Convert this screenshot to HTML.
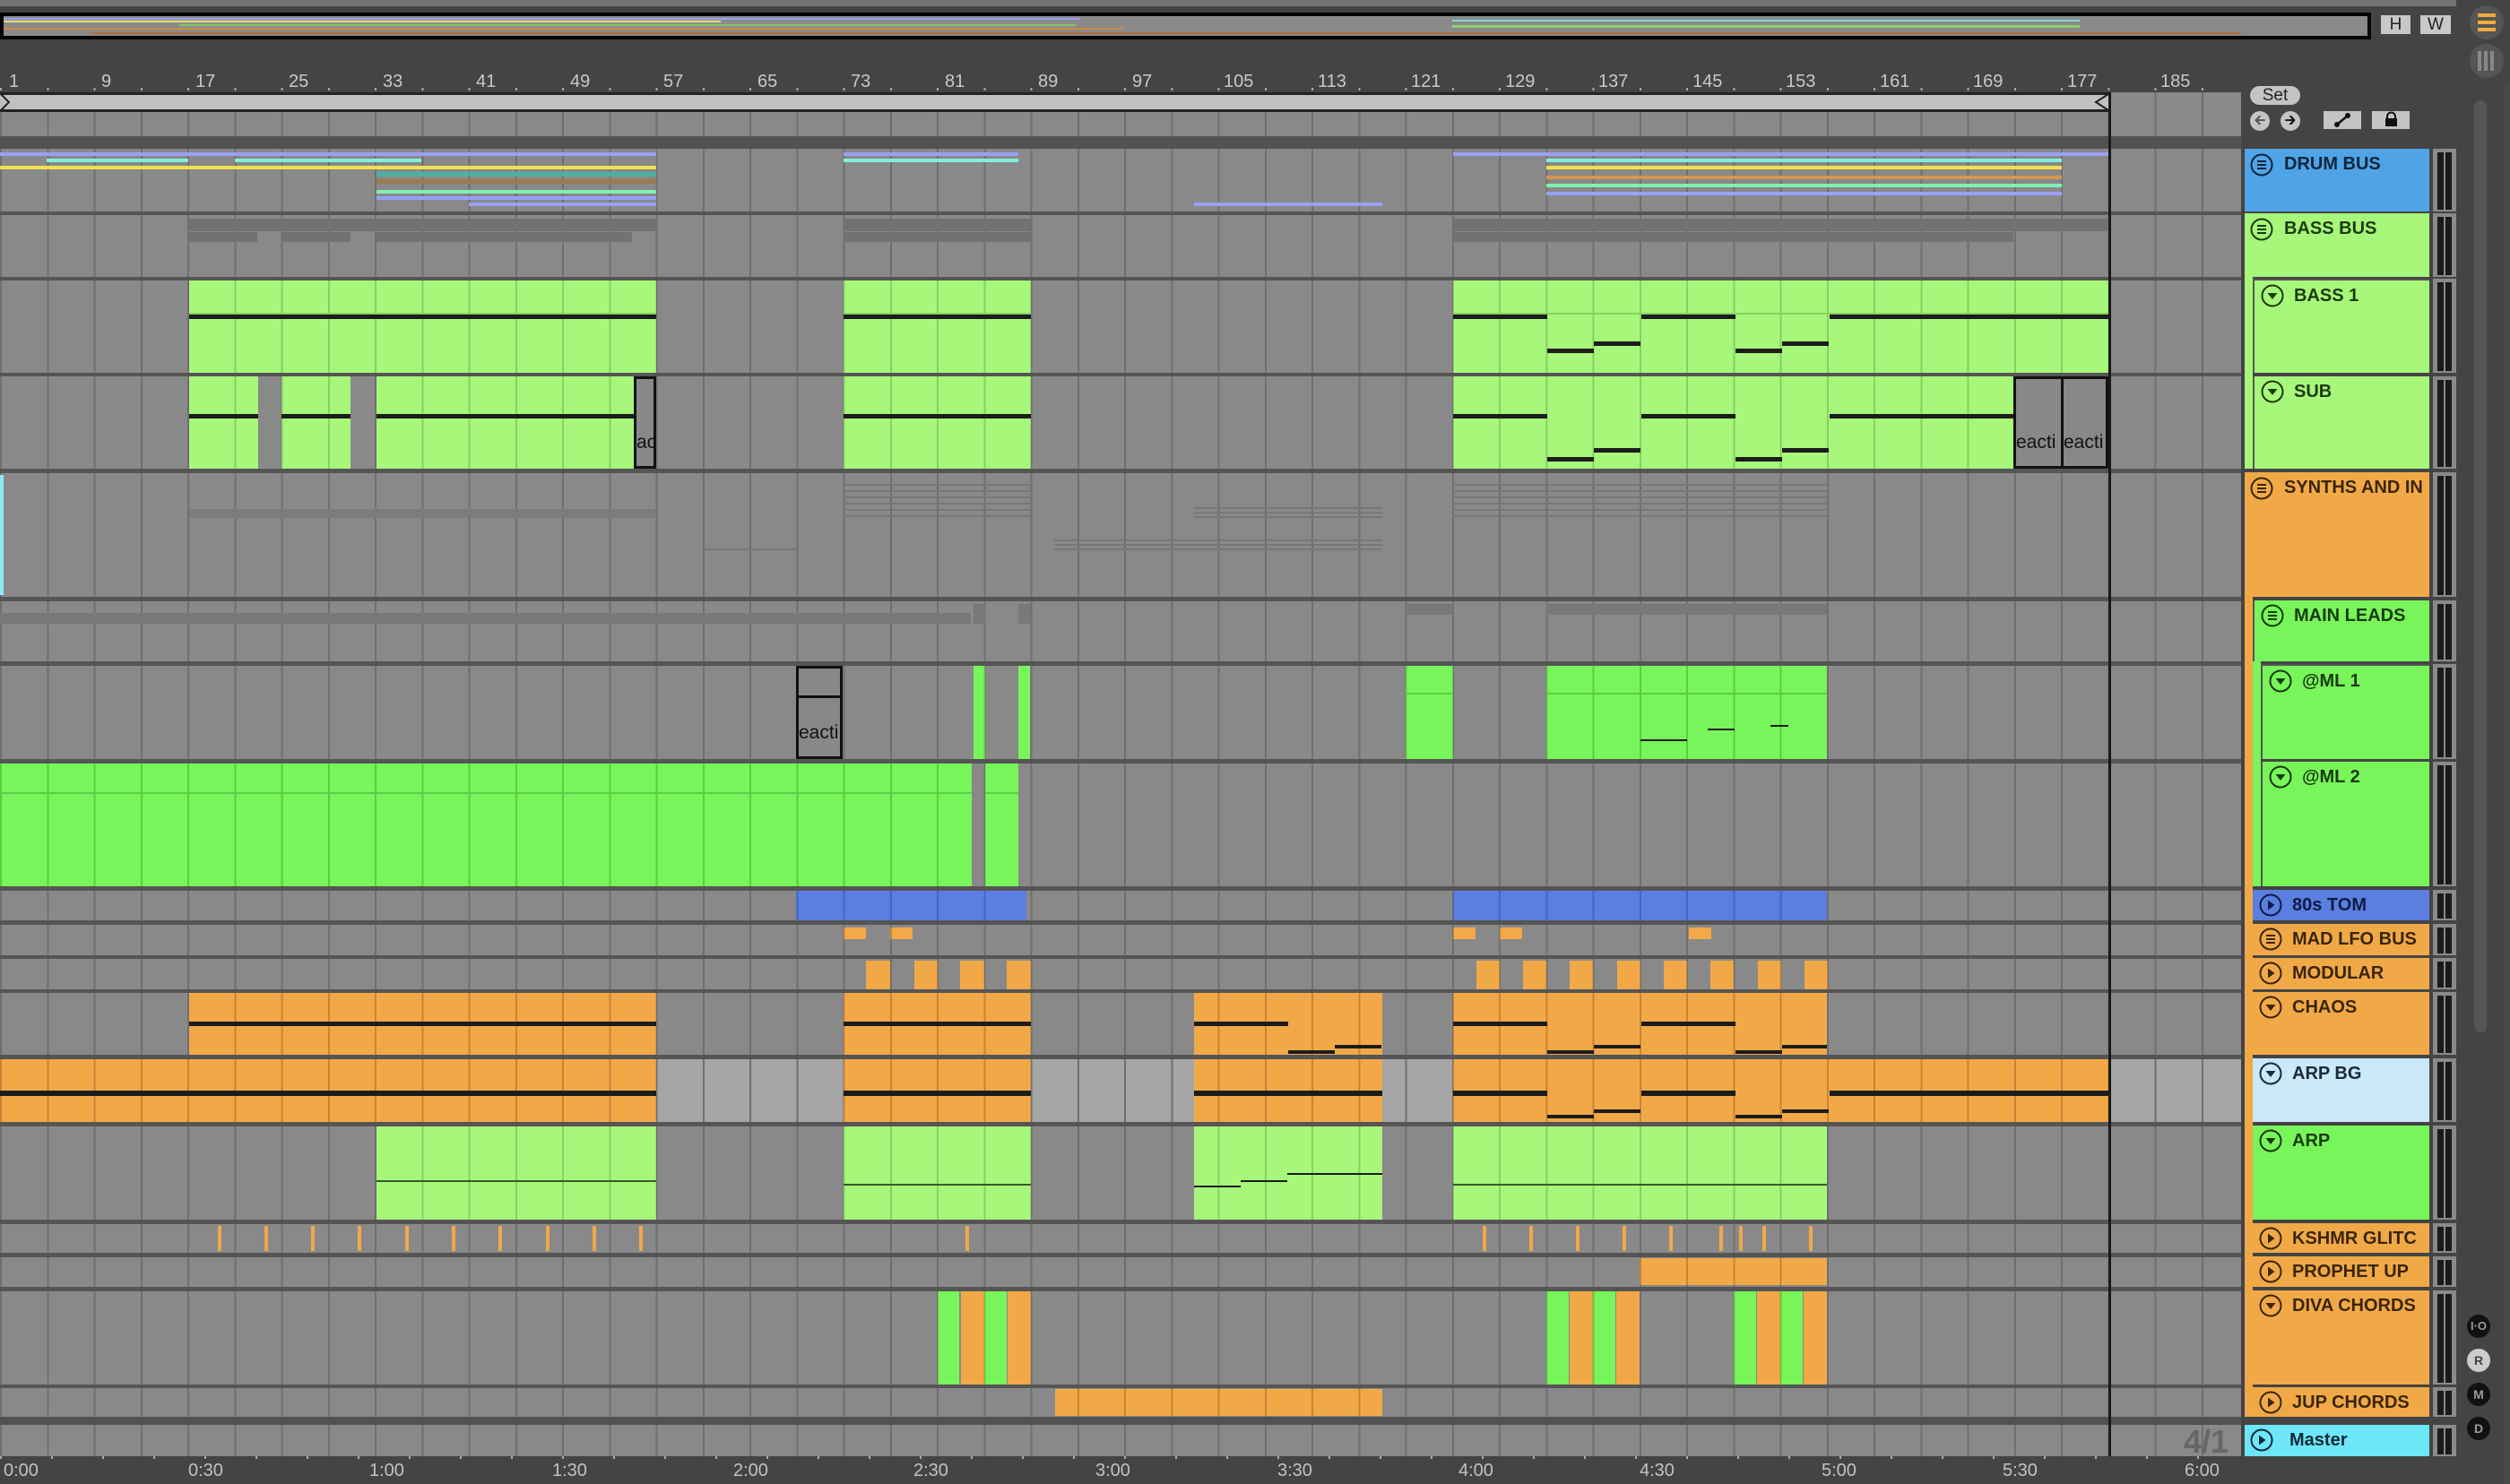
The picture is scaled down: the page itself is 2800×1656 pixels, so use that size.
<!DOCTYPE html>
<html><head><meta charset="utf-8"><style>
*{margin:0;padding:0;box-sizing:border-box}
body{width:2800px;height:1656px;background:#444;position:relative;overflow:hidden;font-family:"Liberation Sans",sans-serif}
div{position:absolute}
.grid{background-color:#898989;background-image:repeating-linear-gradient(90deg,#6f6f6f 0 2px,transparent 2px 52.25px);background-attachment:fixed}
.g{background-color:#a7f77b;background-image:repeating-linear-gradient(90deg,#86d260 0 2px,transparent 2px 52.25px);background-attachment:fixed}
.G{background-color:#78f55a;background-image:repeating-linear-gradient(90deg,#5ccc44 0 2px,transparent 2px 52.25px);background-attachment:fixed}
.o{background-color:#f1a948;background-image:repeating-linear-gradient(90deg,#c88534 0 2px,transparent 2px 52.25px);background-attachment:fixed}
.b{background-color:#5b7fe0;background-image:repeating-linear-gradient(90deg,#4565c0 0 2px,transparent 2px 52.25px);background-attachment:fixed}
.band{left:0;right:0;height:2px}
.k{background:#1c1c1c}
.gc{background:#888;border:3px solid #111}
.gc span{position:absolute;bottom:14px;left:0;font-size:21px;color:#111;white-space:nowrap;overflow:hidden;width:100%}
.hd{font-weight:bold;font-size:20px;color:#1b1b1b;white-space:nowrap;overflow:hidden}
.hd svg{position:absolute}
.hd b{position:absolute;top:6px}
.m{left:2714px;width:26px;background:#8a8a8a}
.m::before{content:"";position:absolute;left:5px;top:4px;bottom:2px;width:7px;background:#1a1a1a}
.m::after{content:"";position:absolute;left:14px;top:4px;bottom:2px;width:7px;background:#1a1a1a}
.rl{top:80px;font-size:20px;color:#c9c9c9}
.tl{top:1630px;font-size:20px;color:#c2c2c2}
.ln{height:4px}
.kt{top:1368px;width:4px;height:28px;background:#f1a948}
</style></head><body>
<div style="left:0;top:0;width:2740px;height:7px;background:#737373"></div>
<div style="left:0;top:14px;width:2645px;height:30px;background:#8a8a8a;border:4px solid #000"></div>
<div style="left:4px;top:20px;width:1200px;height:2px;background:#9aa0f5"></div>
<div style="left:4px;top:23px;width:800px;height:2px;background:#e8e070"></div>
<div style="left:200px;top:27px;width:1000px;height:2px;background:#7ccc6a"></div>
<div style="left:4px;top:31px;width:1250px;height:2px;background:#d08a40"></div>
<div style="left:100px;top:36px;width:2400px;height:2px;background:#b07040"></div>
<div style="left:1620px;top:22px;width:700px;height:2px;background:#80d8c8"></div>
<div style="left:1620px;top:28px;width:700px;height:3px;background:#90d070"></div>
<div style="left:2656px;top:17px;width:33px;height:21px;background:#c8c8c8;font-size:19px;text-align:center;line-height:21px;color:#222">H</div>
<div style="left:2700px;top:17px;width:34px;height:21px;background:#c8c8c8;font-size:19px;text-align:center;line-height:21px;color:#222">W</div>
<div style="left:2755px;top:6px;width:38px;height:38px;border-radius:50%;background:#555"></div>
<div style="left:2764px;top:15px;width:20px;height:4px;background:#f2aa3c"></div>
<div style="left:2764px;top:23px;width:20px;height:4px;background:#f2aa3c"></div>
<div style="left:2764px;top:31px;width:20px;height:4px;background:#f2aa3c"></div>
<div style="left:2755px;top:49px;width:38px;height:38px;border-radius:50%;background:#555"></div>
<div style="left:2764px;top:57px;width:4px;height:22px;background:#888"></div>
<div style="left:2771px;top:57px;width:4px;height:22px;background:#888"></div>
<div style="left:2778px;top:57px;width:4px;height:22px;background:#888"></div>
<div style="left:2794px;top:95px;width:6px;height:1561px;background:#4a4a4a"></div>
<div style="left:2760px;top:112px;width:14px;height:1040px;border-radius:7px;background:#555"></div>

<div class="rl" style="left:10px">1</div>
<div class="rl" style="left:113px">9</div><div class="rl" style="left:218px">17</div><div class="rl" style="left:322px">25</div><div class="rl" style="left:427px">33</div><div class="rl" style="left:531px">41</div><div class="rl" style="left:636px">49</div><div class="rl" style="left:740px">57</div><div class="rl" style="left:845px">65</div><div class="rl" style="left:949px">73</div><div class="rl" style="left:1054px">81</div><div class="rl" style="left:1158px">89</div><div class="rl" style="left:1263px">97</div><div class="rl" style="left:1365px">105</div><div class="rl" style="left:1470px">113</div><div class="rl" style="left:1574px">121</div><div class="rl" style="left:1679px">129</div><div class="rl" style="left:1783px">137</div><div class="rl" style="left:1888px">145</div><div class="rl" style="left:1992px">153</div><div class="rl" style="left:2097px">161</div><div class="rl" style="left:2201px">169</div><div class="rl" style="left:2306px">177</div><div class="rl" style="left:2410px">185</div>
<div style="left:0;top:98px;width:2500px;height:3px;background-image:repeating-linear-gradient(90deg,#aaa 0 2px,transparent 2px 52.25px)"></div>
<div style="left:0;top:103px;width:2353px;height:22px;background:#c0c0c0;border-top:3px solid #222;border-bottom:3px solid #222"></div>
<div style="left:2353px;top:103px;width:147px;height:49px" class="grid"></div>
<svg style="position:absolute;left:0;top:104px" width="14" height="20"><path d="M1 1 L10 10 L1 19" fill="none" stroke="#222" stroke-width="2"/></svg>
<svg style="position:absolute;left:2335px;top:104px" width="18" height="20"><path d="M17 1 L3 10 L17 19" fill="none" stroke="#222" stroke-width="2"/></svg>
<div class="grid" style="left:0;top:125px;width:2500px;height:27px"></div>
<div style="left:0;top:152px;width:2500px;height:14px;background:#525252"></div>

<div style="left:0;top:166px;width:2500px;height:1424px;background:#555"></div>
<div class="grid" style="left:0;top:166px;width:2500px;height:70px"></div>
<div class="grid" style="left:0;top:240px;width:2500px;height:69px"></div>
<div class="grid" style="left:0;top:313px;width:2500px;height:103px"></div>
<div class="grid" style="left:0;top:420px;width:2500px;height:103px"></div>
<div class="grid" style="left:0;top:528px;width:2500px;height:138px"></div>
<div class="grid" style="left:0;top:671px;width:2500px;height:67px"></div>
<div class="grid" style="left:0;top:743px;width:2500px;height:104px"></div>
<div class="grid" style="left:0;top:852px;width:2500px;height:137px"></div>
<div class="grid" style="left:0;top:994px;width:2500px;height:33px"></div>
<div class="grid" style="left:0;top:1032px;width:2500px;height:34px"></div>
<div class="grid" style="left:0;top:1070px;width:2500px;height:34px"></div>
<div class="grid" style="left:0;top:1108px;width:2500px;height:69px"></div>
<div class="grid" style="left:0;top:1182px;width:2500px;height:70px;background-color:#a6a6a6"></div>
<div class="grid" style="left:0;top:1257px;width:2500px;height:104px"></div>
<div class="grid" style="left:0;top:1366px;width:2500px;height:32px"></div>
<div class="grid" style="left:0;top:1403px;width:2500px;height:33px"></div>
<div class="grid" style="left:0;top:1441px;width:2500px;height:104px"></div>
<div class="grid" style="left:0;top:1549px;width:2500px;height:32px"></div>
<div style="left:0;top:1581px;width:2500px;height:9px;background:#525252"></div>
<div class="grid" style="left:0;top:1590px;width:2500px;height:35px"></div>

<div class="ln" style="left:0;top:170px;width:732px;background:#9aa0f5"></div>
<div class="ln" style="left:941px;top:170px;width:195px;background:#9aa0f5"></div>
<div class="ln" style="left:1621px;top:170px;width:731px;background:#9aa0f5"></div>
<div class="ln" style="left:52px;top:177px;width:158px;background:#80f0dc"></div>
<div class="ln" style="left:262px;top:177px;width:208px;background:#80f0dc"></div>
<div class="ln" style="left:941px;top:177px;width:195px;background:#80f0dc"></div>
<div class="ln" style="left:1725px;top:177px;width:575px;background:#80f0dc"></div>
<div class="ln" style="left:0;top:185px;width:732px;background:#f0e050"></div>
<div class="ln" style="left:1725px;top:185px;width:575px;background:#f0e050"></div>
<div class="ln" style="left:420px;top:192px;width:312px;height:5px;background:#50b0a0"></div>
<div class="ln" style="left:420px;top:200px;width:312px;height:5px;background:#9a7a50"></div>
<div class="ln" style="left:420px;top:212px;width:312px;background:#80f0b0"></div>
<div class="ln" style="left:420px;top:219px;width:312px;background:#9aa0f5"></div>
<div class="ln" style="left:523px;top:226px;width:209px;background:#9aa0f5"></div>
<div class="ln" style="left:1332px;top:226px;width:210px;background:#9aa0f5"></div>
<div class="ln" style="left:1725px;top:196px;width:575px;background:#d09a50"></div>
<div class="ln" style="left:1725px;top:205px;width:575px;background:#80f0b0"></div>
<div class="ln" style="left:1725px;top:214px;width:575px;background:#9aa0f5"></div>
<div style="left:211px;top:244px;width:521px;height:14px;background:#727272"></div>
<div style="left:941px;top:244px;width:209px;height:14px;background:#727272"></div>
<div style="left:1621px;top:244px;width:731px;height:14px;background:#727272"></div>
<div style="left:211px;top:259px;width:76px;height:11px;background:#727272"></div>
<div style="left:315px;top:259px;width:76px;height:11px;background:#727272"></div>
<div style="left:420px;top:259px;width:285px;height:11px;background:#727272"></div>
<div style="left:941px;top:259px;width:209px;height:11px;background:#727272"></div>
<div style="left:1621px;top:259px;width:625px;height:11px;background:#727272"></div>
<div class="g" style="left:211px;top:313px;width:521px;height:103px"><div class="band" style="top:36px;background:#86d260"></div><div class="band k" style="top:38px;height:5px"></div></div>
<div class="g" style="left:941px;top:313px;width:209px;height:103px"><div class="band" style="top:36px;background:#86d260"></div><div class="band k" style="top:38px;height:5px"></div></div>
<div class="g" style="left:1621px;top:313px;width:731px;height:103px"><div class="band" style="top:36px;background:#86d260"></div><div class="band k" style="top:38px;height:5px;width:105px"></div><div class="k" style="left:105px;top:76px;width:52px;height:5px"></div><div class="k" style="left:157px;top:68px;width:52px;height:5px"></div><div class="band k" style="top:38px;height:5px;left:210px;width:105px"></div><div class="k" style="left:315px;top:76px;width:52px;height:5px"></div><div class="k" style="left:367px;top:68px;width:52px;height:5px"></div><div class="k" style="left:420px;top:38px;width:311px;height:5px"></div></div>
<div class="g" style="left:211px;top:420px;width:77px;height:103px"><div class="band k" style="top:42px;height:5px"></div></div>
<div class="g" style="left:314px;top:420px;width:77px;height:103px"><div class="band k" style="top:42px;height:5px"></div></div>
<div class="g" style="left:420px;top:420px;width:287px;height:103px"><div class="band k" style="top:42px;height:5px"></div></div>
<div class="gc" style="left:707px;top:420px;width:25px;height:103px"><span>ac</span></div>
<div class="g" style="left:941px;top:420px;width:209px;height:103px"><div class="band k" style="top:42px;height:5px"></div></div>
<div class="g" style="left:1621px;top:420px;width:625px;height:103px"><div class="k" style="left:0;top:42px;width:105px;height:5px"></div><div class="k" style="left:105px;top:90px;width:52px;height:5px"></div><div class="k" style="left:157px;top:80px;width:52px;height:5px"></div><div class="k" style="left:210px;top:42px;width:105px;height:5px"></div><div class="k" style="left:315px;top:90px;width:52px;height:5px"></div><div class="k" style="left:367px;top:80px;width:52px;height:5px"></div><div class="k" style="left:420px;top:42px;width:205px;height:5px"></div></div>
<div class="gc" style="left:2246px;top:420px;width:56px;height:103px"><span>eacti</span></div>
<div class="gc" style="left:2299px;top:420px;width:53px;height:103px"><span>eacti</span></div>
<div style="left:0;top:530px;width:4px;height:134px;background:#8fe8f8"></div>
<div style="left:211px;top:568px;width:521px;height:10px;background:#7c7c7c"></div>
<div style="left:941px;top:540px;width:209px;height:40px;background:repeating-linear-gradient(180deg,#777 0 2px,transparent 2px 7px)"></div>
<div style="left:1621px;top:540px;width:420px;height:40px;background:repeating-linear-gradient(180deg,#777 0 2px,transparent 2px 7px)"></div>
<div style="left:1332px;top:566px;width:210px;height:14px;background:repeating-linear-gradient(180deg,#777 0 2px,transparent 2px 5px)"></div>
<div style="left:1176px;top:602px;width:366px;height:12px;background:repeating-linear-gradient(180deg,#777 0 2px,transparent 2px 5px)"></div>
<div style="left:785px;top:612px;width:105px;height:2px;background:#777"></div>
<div style="left:0;top:684px;width:1083px;height:12px;background:#787878"></div>
<div style="left:1086px;top:674px;width:14px;height:22px;background:#787878"></div>
<div style="left:1136px;top:674px;width:14px;height:22px;background:#787878"></div>
<div style="left:1568px;top:674px;width:53px;height:12px;background:#787878"></div>
<div style="left:1725px;top:674px;width:313px;height:12px;background:#787878"></div>
<div class="gc" style="left:888px;top:743px;width:52px;height:104px"><div class="band" style="top:30px;height:3px;background:#111"></div><span>eacti</span></div>
<div class="G" style="left:1086px;top:743px;width:13px;height:104px"></div>
<div class="G" style="left:1136px;top:743px;width:13px;height:104px"></div>
<div class="G" style="left:1568px;top:743px;width:53px;height:104px"><div class="band" style="top:30px;background:#5ccc44"></div></div>
<div class="G" style="left:1725px;top:743px;width:313px;height:104px"><div class="band" style="top:30px;background:#5ccc44"></div><div class="k" style="left:105px;top:82px;width:52px;height:2px"></div><div class="k" style="left:180px;top:70px;width:30px;height:2px"></div><div class="k" style="left:250px;top:66px;width:20px;height:2px"></div></div>
<div class="G" style="left:0;top:852px;width:1084px;height:137px"><div class="band" style="top:32px;background:#5ccc44"></div></div>
<div class="G" style="left:1099px;top:852px;width:37px;height:137px"><div class="band" style="top:32px;background:#5ccc44"></div></div>
<div class="b" style="left:888px;top:994px;width:257px;height:33px"></div>
<div class="b" style="left:1621px;top:994px;width:417px;height:33px"></div>
<div class="o" style="left:941px;top:1035px;width:25px;height:13px"></div>
<div class="o" style="left:993px;top:1035px;width:25px;height:13px"></div>
<div class="o" style="left:1621px;top:1035px;width:25px;height:13px"></div>
<div class="o" style="left:1673px;top:1035px;width:25px;height:13px"></div>
<div class="o" style="left:1884px;top:1035px;width:25px;height:13px"></div>
<div class="o" style="left:966px;top:1072px;width:27px;height:32px"></div>
<div class="o" style="left:1020px;top:1072px;width:26px;height:32px"></div>
<div class="o" style="left:1071px;top:1072px;width:27px;height:32px"></div>
<div class="o" style="left:1123px;top:1072px;width:27px;height:32px"></div>
<div class="o" style="left:1647px;top:1072px;width:26px;height:32px"></div>
<div class="o" style="left:1699px;top:1072px;width:26px;height:32px"></div>
<div class="o" style="left:1751px;top:1072px;width:26px;height:32px"></div>
<div class="o" style="left:1804px;top:1072px;width:26px;height:32px"></div>
<div class="o" style="left:1856px;top:1072px;width:26px;height:32px"></div>
<div class="o" style="left:1908px;top:1072px;width:26px;height:32px"></div>
<div class="o" style="left:1961px;top:1072px;width:26px;height:32px"></div>
<div class="o" style="left:2013px;top:1072px;width:26px;height:32px"></div>
<div class="o" style="left:211px;top:1108px;width:521px;height:69px"><div class="band k" style="top:32px;height:5px"></div></div>
<div class="o" style="left:941px;top:1108px;width:209px;height:69px"><div class="band k" style="top:32px;height:5px"></div></div>
<div class="o" style="left:1332px;top:1108px;width:210px;height:69px"><div class="k" style="left:0;top:32px;width:105px;height:5px"></div><div class="k" style="left:105px;top:64px;width:52px;height:4px"></div><div class="k" style="left:157px;top:58px;width:52px;height:4px"></div></div>
<div class="o" style="left:1621px;top:1108px;width:417px;height:69px"><div class="k" style="left:0;top:32px;width:105px;height:5px"></div><div class="k" style="left:105px;top:64px;width:52px;height:4px"></div><div class="k" style="left:157px;top:58px;width:52px;height:4px"></div><div class="k" style="left:210px;top:32px;width:105px;height:5px"></div><div class="k" style="left:315px;top:64px;width:52px;height:4px"></div><div class="k" style="left:367px;top:58px;width:50px;height:4px"></div></div>
<div class="o" style="left:0;top:1182px;width:732px;height:70px"><div class="band k" style="top:35px;height:6px"></div></div>
<div class="o" style="left:941px;top:1182px;width:209px;height:70px"><div class="band k" style="top:35px;height:6px"></div></div>
<div class="o" style="left:1332px;top:1182px;width:210px;height:70px"><div class="band k" style="top:35px;height:6px"></div></div>
<div class="o" style="left:1621px;top:1182px;width:731px;height:70px"><div class="k" style="left:0;top:35px;width:105px;height:6px"></div><div class="k" style="left:105px;top:62px;width:52px;height:4px"></div><div class="k" style="left:157px;top:56px;width:52px;height:4px"></div><div class="k" style="left:210px;top:35px;width:105px;height:6px"></div><div class="k" style="left:315px;top:62px;width:52px;height:4px"></div><div class="k" style="left:367px;top:56px;width:52px;height:4px"></div><div class="k" style="left:420px;top:35px;width:311px;height:6px"></div></div>
<div class="g" style="left:420px;top:1257px;width:312px;height:104px"><div class="band" style="top:60px;background:#3a5a2a"></div></div>
<div class="g" style="left:941px;top:1257px;width:209px;height:104px"><div class="band" style="top:64px;background:#3a5a2a"></div></div>
<div class="g" style="left:1332px;top:1257px;width:210px;height:104px"><div class="k" style="left:0;top:66px;width:52px;height:2px"></div><div class="k" style="left:52px;top:60px;width:52px;height:2px"></div><div class="k" style="left:104px;top:52px;width:106px;height:2px"></div></div>
<div class="g" style="left:1621px;top:1257px;width:417px;height:104px"><div class="band" style="top:64px;background:#3a5a2a"></div></div>
<div class="kt" style="left:243px"></div><div class="kt" style="left:295px"></div><div class="kt" style="left:347px"></div><div class="kt" style="left:399px"></div><div class="kt" style="left:452px"></div><div class="kt" style="left:504px"></div><div class="kt" style="left:556px"></div><div class="kt" style="left:609px"></div><div class="kt" style="left:661px"></div><div class="kt" style="left:713px"></div>
<div class="kt" style="left:1077px"></div><div class="kt" style="left:1654px"></div><div class="kt" style="left:1706px"></div><div class="kt" style="left:1758px"></div><div class="kt" style="left:1810px"></div><div class="kt" style="left:1862px"></div><div class="kt" style="left:1918px"></div><div class="kt" style="left:1940px"></div><div class="kt" style="left:1966px"></div><div class="kt" style="left:2018px"></div>
<div class="o" style="left:1829px;top:1404px;width:209px;height:30px"></div>
<div class="G" style="left:1046px;top:1441px;width:24px;height:104px"></div>
<div class="o" style="left:1072px;top:1441px;width:26px;height:104px"></div>
<div class="G" style="left:1098px;top:1441px;width:25px;height:104px"></div>
<div class="o" style="left:1124px;top:1441px;width:26px;height:104px"></div>
<div class="G" style="left:1725px;top:1441px;width:25px;height:104px"></div>
<div class="o" style="left:1751px;top:1441px;width:26px;height:104px"></div>
<div class="G" style="left:1777px;top:1441px;width:25px;height:104px"></div>
<div class="o" style="left:1803px;top:1441px;width:26px;height:104px"></div>
<div class="G" style="left:1934px;top:1441px;width:25px;height:104px"></div>
<div class="o" style="left:1960px;top:1441px;width:26px;height:104px"></div>
<div class="G" style="left:1986px;top:1441px;width:25px;height:104px"></div>
<div class="o" style="left:2012px;top:1441px;width:26px;height:104px"></div>
<div class="o" style="left:1177px;top:1550px;width:365px;height:30px"></div>
<div style="left:2352px;top:103px;width:3px;height:1522px;background:#1a1a1a"></div>
<div style="left:2436px;top:1588px;font-size:36px;font-weight:bold;color:#666">4/1</div>
<div style="left:0;top:1625px;width:2500px;height:3px;background-image:repeating-linear-gradient(90deg,#aaa 0 2px,transparent 2px 57px)"></div>
<div class="tl" style="left:4px">0:00</div><div class="tl" style="left:210px">0:30</div><div class="tl" style="left:412px">1:00</div><div class="tl" style="left:616px">1:30</div><div class="tl" style="left:818px">2:00</div><div class="tl" style="left:1019px">2:30</div><div class="tl" style="left:1222px">3:00</div><div class="tl" style="left:1425px">3:30</div><div class="tl" style="left:1627px">4:00</div><div class="tl" style="left:1829px">4:30</div><div class="tl" style="left:2032px">5:00</div><div class="tl" style="left:2234px">5:30</div><div class="tl" style="left:2437px">6:00</div>

<div style="left:2510px;top:96px;width:56px;height:21px;border-radius:11px;background:#c4c4c4;font-size:19px;text-align:center;line-height:21px;color:#222">Set</div>
<div style="left:2510px;top:124px;width:22px;height:22px;border-radius:50%;background:#c4c4c4;font-size:16px;text-align:center;line-height:22px;color:#555">&#129136;</div>
<div style="left:2544px;top:124px;width:22px;height:22px;border-radius:50%;background:#c4c4c4;font-size:16px;text-align:center;line-height:22px;color:#111">&#129138;</div>
<div style="left:2592px;top:124px;width:42px;height:20px;background:#c4c4c4"><svg width="42" height="20"><path d="M15 15 L27 5" stroke="#111" stroke-width="2.5"/><circle cx="15" cy="15" r="3" fill="#111"/><circle cx="27" cy="5" r="3" fill="#111"/></svg></div>
<div style="left:2646px;top:124px;width:42px;height:20px;background:#c4c4c4"><svg width="42" height="20"><rect x="15" y="8" width="13" height="9" fill="#111"/><path d="M17 9 V6 a4.5 4.5 0 0 1 9 0 V9" fill="none" stroke="#111" stroke-width="2"/></svg></div>

<div style="left:2504px;top:309px;width:9px;height:214px;background:#a6f77a"></div>
<div style="left:2504px;top:666px;width:9px;height:915px;background:#f1a948"></div>
<div style="left:2513px;top:738px;width:9px;height:251px;background:#78f55a"></div>

<svg width="0" height="0" style="position:absolute"><defs>
<symbol id="grp" viewBox="0 0 26 26"><circle cx="13" cy="13" r="11.5" fill="none" stroke="currentColor" stroke-width="2"/><path d="M8 9h10M8 13h10M8 17h10" stroke="currentColor" stroke-width="2"/></symbol>
<symbol id="dn" viewBox="0 0 26 26"><circle cx="13" cy="13" r="11.5" fill="none" stroke="currentColor" stroke-width="2"/><path d="M7.5 10h11L13 17z" fill="currentColor"/></symbol>
<symbol id="pl" viewBox="0 0 26 26"><circle cx="13" cy="13" r="11.5" fill="none" stroke="currentColor" stroke-width="2"/><path d="M10 7.5v11L17.5 13z" fill="currentColor"/></symbol>
</defs></svg>

<div class="hd" style="left:2504px;top:166px;width:206px;height:70px;background:#4ea4e6;color:#10253a"><svg style="left:6px;top:5px" width="26" height="26"><use href="#grp"/></svg><b style="left:44px">DRUM BUS</b></div>
<div class="hd" style="left:2504px;top:238px;width:206px;height:71px;background:#a6f77a;color:#1e3a12"><svg style="left:6px;top:5px" width="26" height="26"><use href="#grp"/></svg><b style="left:44px">BASS BUS</b></div>
<div class="hd" style="left:2513px;top:311px;width:197px;height:105px;background:#a6f77a;color:#1e3a12;border-left:2px solid #555;border-top:2px solid #555"><svg style="left:7px;top:4px" width="26" height="26"><use href="#dn"/></svg><b style="left:44px">BASS 1</b></div>
<div class="hd" style="left:2513px;top:420px;width:197px;height:103px;background:#a6f77a;color:#1e3a12;border-left:2px solid #555"><svg style="left:7px;top:4px" width="26" height="26"><use href="#dn"/></svg><b style="left:44px">SUB</b></div>
<div class="hd" style="left:2504px;top:527px;width:206px;height:139px;background:#f1a948;color:#3a2608"><svg style="left:6px;top:5px" width="26" height="26"><use href="#grp"/></svg><b style="left:44px">SYNTHS AND IN</b></div>
<div class="hd" style="left:2513px;top:670px;width:197px;height:68px;background:#78f55a;color:#1a3a10;border-left:2px solid #555"><svg style="left:7px;top:4px" width="26" height="26"><use href="#grp"/></svg><b style="left:44px">MAIN LEADS</b></div>
<div class="hd" style="left:2522px;top:741px;width:188px;height:106px;background:#78f55a;color:#1a3a10;border-left:2px solid #555;border-top:2px solid #555"><svg style="left:7px;top:4px" width="26" height="26"><use href="#dn"/></svg><b style="left:44px">@ML 1</b></div>
<div class="hd" style="left:2522px;top:850px;width:188px;height:139px;background:#78f55a;color:#1a3a10;border-left:2px solid #555"><svg style="left:7px;top:4px" width="26" height="26"><use href="#dn"/></svg><b style="left:44px">@ML 2</b></div>
<div class="hd" style="left:2513px;top:993px;width:197px;height:34px;background:#5b7fe0;color:#0e1c44"><svg style="left:7px;top:4px" width="26" height="26"><use href="#pl"/></svg><b style="left:44px">80s TOM</b></div>
<div class="hd" style="left:2513px;top:1031px;width:197px;height:35px;background:#f1a948;color:#3a2608"><svg style="left:7px;top:4px" width="26" height="26"><use href="#grp"/></svg><b style="left:44px">MAD LFO BUS</b></div>
<div class="hd" style="left:2513px;top:1069px;width:197px;height:35px;background:#f1a948;color:#3a2608"><svg style="left:7px;top:4px" width="26" height="26"><use href="#pl"/></svg><b style="left:44px">MODULAR</b></div>
<div class="hd" style="left:2513px;top:1107px;width:197px;height:70px;background:#f1a948;color:#3a2608"><svg style="left:7px;top:4px" width="26" height="26"><use href="#dn"/></svg><b style="left:44px">CHAOS</b></div>
<div class="hd" style="left:2513px;top:1181px;width:197px;height:71px;background:#c9e8fa;color:#1a2a34"><svg style="left:7px;top:4px" width="26" height="26"><use href="#dn"/></svg><b style="left:44px">ARP BG</b></div>
<div class="hd" style="left:2513px;top:1256px;width:197px;height:105px;background:#78f55a;color:#1a3a10"><svg style="left:7px;top:4px" width="26" height="26"><use href="#dn"/></svg><b style="left:44px">ARP</b></div>
<div class="hd" style="left:2513px;top:1365px;width:197px;height:33px;background:#f1a948;color:#3a2608"><svg style="left:7px;top:4px" width="26" height="26"><use href="#pl"/></svg><b style="left:44px">KSHMR GLITC</b></div>
<div class="hd" style="left:2513px;top:1402px;width:197px;height:34px;background:#f1a948;color:#3a2608"><svg style="left:7px;top:4px" width="26" height="26"><use href="#pl"/></svg><b style="left:44px">PROPHET UP</b></div>
<div class="hd" style="left:2513px;top:1440px;width:197px;height:105px;background:#f1a948;color:#3a2608"><svg style="left:7px;top:4px" width="26" height="26"><use href="#dn"/></svg><b style="left:44px">DIVA CHORDS</b></div>
<div class="hd" style="left:2513px;top:1548px;width:197px;height:33px;background:#f1a948;color:#3a2608"><svg style="left:7px;top:4px" width="26" height="26"><use href="#pl"/></svg><b style="left:44px">JUP CHORDS</b></div>
<div class="hd" style="left:2504px;top:1590px;width:206px;height:35px;background:#6ce6f8;color:#0e2a34"><svg style="left:6px;top:4px" width="26" height="26"><use href="#pl"/></svg><b style="left:50px">Master</b></div>

<div class="m" style="top:166px;height:70px"></div><div class="m" style="top:238px;height:71px"></div><div class="m" style="top:311px;height:105px"></div><div class="m" style="top:420px;height:103px"></div><div class="m" style="top:527px;height:139px"></div><div class="m" style="top:670px;height:68px"></div><div class="m" style="top:741px;height:106px"></div><div class="m" style="top:850px;height:139px"></div><div class="m" style="top:993px;height:34px"></div><div class="m" style="top:1031px;height:35px"></div><div class="m" style="top:1069px;height:35px"></div><div class="m" style="top:1107px;height:70px"></div><div class="m" style="top:1181px;height:71px"></div><div class="m" style="top:1256px;height:105px"></div><div class="m" style="top:1365px;height:33px"></div><div class="m" style="top:1402px;height:34px"></div><div class="m" style="top:1440px;height:105px"></div><div class="m" style="top:1548px;height:33px"></div><div class="m" style="top:1590px;height:35px"></div>

<div style="left:2752px;top:1467px;width:26px;height:26px;border-radius:50%;background:#111;color:#999;font-size:13px;text-align:center;line-height:26px;font-weight:bold">I·O</div>
<div style="left:2752px;top:1505px;width:26px;height:26px;border-radius:50%;background:#ccc;color:#444;font-size:14px;text-align:center;line-height:26px;font-weight:bold">R</div>
<div style="left:2752px;top:1543px;width:26px;height:26px;border-radius:50%;background:#111;color:#999;font-size:14px;text-align:center;line-height:26px;font-weight:bold">M</div>
<div style="left:2752px;top:1581px;width:26px;height:26px;border-radius:50%;background:#111;color:#999;font-size:14px;text-align:center;line-height:26px;font-weight:bold">D</div>
</body></html>
